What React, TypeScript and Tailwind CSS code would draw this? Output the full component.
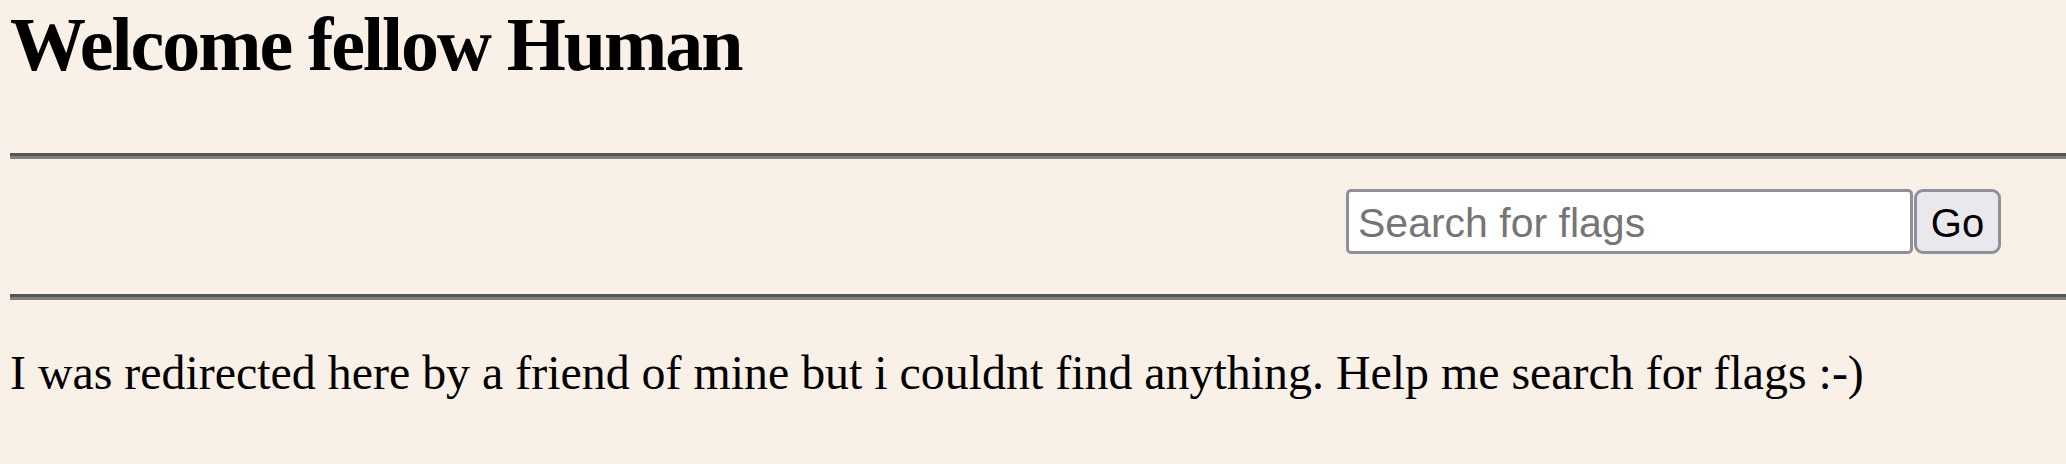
export default function App() {
    return (
        <div className="min-h-[464px] w-full bg-[#f9f0e7] text-black font-['Liberation_Serif','Times_New_Roman',serif] overflow-hidden">
            <h1 className="mt-[2px] pl-[10px] text-[76px] leading-[84px] font-bold tracking-[-0.027em] whitespace-nowrap">
                Welcome fellow Human
            </h1>

            <div className="mt-[67px] ml-[10px] border-t-[3px] border-b-[3px] border-t-[#555555] border-b-[#808080]" />

            <form
                className="mt-[30px] flex justify-end pr-[65px]"
                onSubmit={(e) => e.preventDefault()}
            >
                <input
                    type="text"
                    placeholder="Search for flags"
                    className="w-[567px] h-[65px] bg-white border-[3px] border-[#8f8f9d] rounded-[5px] px-[9px] pt-[3px] text-[41px] font-['Liberation_Sans',Arial,sans-serif] placeholder:text-[#757575] outline-none"
                />
                <button
                    type="submit"
                    className="ml-[1px] w-[87px] h-[65px] bg-[#e9e9ed] border-[3px] border-[#8f8f9d] rounded-[9px] pt-[3px] text-[40px] text-black font-['Liberation_Sans',Arial,sans-serif] leading-none"
                >
                    Go
                </button>
            </form>

            <div className="mt-[40px] ml-[10px] border-t-[3px] border-b-[3px] border-t-[#555555] border-b-[#808080]" />

            <p className="mt-[46px] pl-[10px] text-[47.9px] leading-[54px] whitespace-nowrap">
                I was redirected here by a friend of mine but i couldnt find anything. Help me search for flags :-)
            </p>
        </div>
    );
}
